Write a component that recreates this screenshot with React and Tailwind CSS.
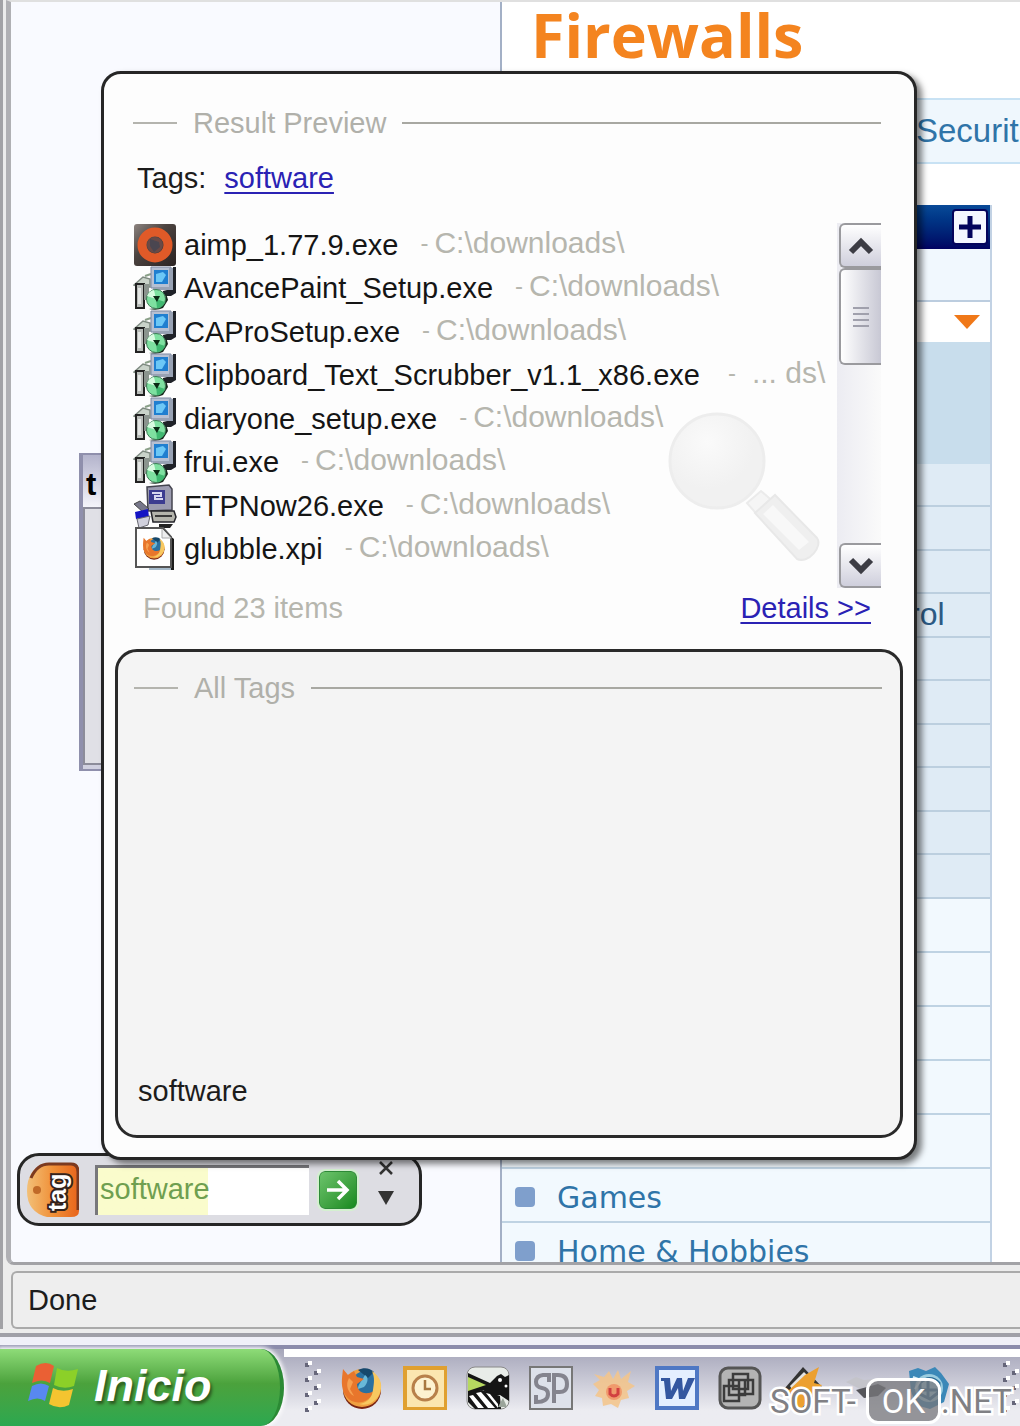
import React from "react";

function SetupIcon() {
  return (
    <svg viewBox="0 0 44 44" className="size-11 shrink-0">
      <path d="M1 19 10 11l7 2v8H6z" fill="#c9d3c9" stroke="#7e8a80" strokeWidth="1.5" />
      <path d="M12 10l6-2" stroke="#8aa088" strokeWidth="2" />
      <path d="M3 18h8v24H3z" fill="#b9bdb9" stroke="#222" strokeWidth="2" />
      <path d="M5 22h3v16H5z" fill="#e4e6e4" />
      <path d="M11 18h5v16h-5z" fill="#8b948e" />
      <path d="M18 1h20v21H18z" fill="#b6c0d2" stroke="#7c87a0" />
      <path d="M40 1h3v26l-5 3h-8v-5l8-2z" fill="#1f2228" />
      <path d="M36 2h4v22H20v-3h16z" fill="#98a2b4" />
      <path d="M21 4h14v14H21z" fill="#1f7fd0" />
      <path d="M23 8l7-2 3 3-4 7h-6z" fill="#6cc8f6" />
      <path d="M16 43q8 2 14-1l5-8-2-7-2 10-7 5z" fill="#16281c" />
      <circle cx="23" cy="33" r="9.500" fill="#7ee0a0" stroke="#3c7c54" />
      <path d="M23 33l-9-3a9.500 9.500 0 0 1 7-6z" fill="#d8fbe0" />
      <path d="M23 33l9 3a9.500 9.500 0 0 1-8 6z" fill="#3fb870" />
      <path d="M20 30h7l-3 6z" fill="#0a2a14" />
    </svg>
  );
}

function AimpIcon() {
  return (
    <svg viewBox="0 0 44 44" className="size-11 shrink-0">
      <defs>
        <linearGradient id="aimpBg" x1="0" y1="0" x2="1" y2="1">
          <stop offset="0" stopColor="#8d8480" />
          <stop offset="0.400" stopColor="#4c4340" />
          <stop offset="1" stopColor="#2a2322" />
        </linearGradient>
      </defs>
      <rect x="1" y="1" width="42" height="42" rx="3" fill="url(#aimpBg)" />
      <circle cx="22" cy="22" r="13" fill="none" stroke="#e05a28" strokeWidth="9" />
      <circle cx="22" cy="22" r="8" fill="#6a4a46" />
      <path d="M17 16l9 3 1 5-6 5-4-6z" fill="#4a4650" />
    </svg>
  );
}

function FtpIcon() {
  return (
    <svg viewBox="0 0 44 44" className="size-11 shrink-0">
      <path d="M14 3l22-2 3 4v21l-24 1z" fill="#9c9cb0" stroke="#44444f" strokeWidth="1.500" />
      <path d="M16 6h16v14H16z" fill="#3c3c90" />
      <path d="M19 9h9v3h-6v3h8" stroke="#d8d8f0" strokeWidth="2" fill="none" />
      <path d="M18 27h23l2 6-2 5H20z" fill="#b4b4ac" stroke="#25252b" strokeWidth="1.500" />
      <path d="M22 32h17" stroke="#3a3a3a" strokeWidth="2" />
      <path d="M26 40h14l-3 4H26z" fill="#222" />
      <path d="M1 20l6-3 9 8-5 4z" fill="#77778a" stroke="#444" />
      <path d="M2 28l13-3 1 8-13 2z" fill="#1414c4" />
      <path d="M4 35l13-3-2 9-9 3z" fill="#d0d0dc" stroke="#66666f" />
    </svg>
  );
}

function Firefox({ x = 0, y = 0, s = 1 }) {
  return (
    <g transform={`translate(${x} ${y}) scale(${s})`}>
      <circle cx="22" cy="24" r="19" fill="#7a2412" />
      <circle cx="22" cy="22" r="19" fill="#f0a040" />
      <circle cx="25" cy="18" r="13" fill="#2a70a0" />
      <path d="M18 4c6-3 12-2 16 2l-6 6z" fill="#16486c" />
      <path d="M25 9c4 2 3 8-1 12l-6 2c0-5 4-8 7-14z" fill="#68b8d8" />
      <path d="M3 3l5 6 6-4 3 6 7 2-7 5c0 8 8 12 17 7-4 12-20 16-28 5C0 22 2 12 3 3z" fill="#e8762c" />
      <path d="M32 5c10 7 11 16 7 24-5 9-14 11-20 9 8-1 13-6 14-14 1-7 2-12-1-19z" fill="#f8c860" />
      <path d="M9 12l4 4-3 7 4 7c-6-3-9-11-5-18z" fill="#f6a050" />
    </g>
  );
}

function XpiIcon() {
  return (
    <svg viewBox="0 0 44 44" className="size-11 shrink-0">
      <path d="M16 39h22v4H16z" fill="#a8bccc" />
      <path d="M36 8l5 4v31h-3z" fill="#1c1c1c" />
      <path d="M3 1h27l8 9v30H3z" fill="#fff" stroke="#555" strokeWidth="2" />
      <path d="M29 2v9h9" fill="#eee" stroke="#aaa" />
      <Firefox x={9} y={9} s={0.55} />
    </svg>
  );
}

const files = [
  { name: "aimp_1.77.9.exe", path: "C:\\downloads\\", Icon: AimpIcon },
  { name: "AvancePaint_Setup.exe", path: "C:\\downloads\\", Icon: SetupIcon },
  { name: "CAProSetup.exe", path: "C:\\downloads\\", Icon: SetupIcon },
  { name: "Clipboard_Text_Scrubber_v1.1_x86.exe", path: "... ds\\", Icon: SetupIcon, truncated: true },
  { name: "diaryone_setup.exe", path: "C:\\downloads\\", Icon: SetupIcon },
  { name: "frui.exe", path: "C:\\downloads\\", Icon: SetupIcon },
  { name: "FTPNow26.exe", path: "C:\\downloads\\", Icon: FtpIcon },
  { name: "glubble.xpi", path: "C:\\downloads\\", Icon: XpiIcon },
];

function Legend({ children }) {
  return (
    <h2 className="flex items-center gap-4 text-[29px] leading-8 text-[#b0b0aa]">
      <span className="h-[2px] w-11 bg-[#b4b4ae]" />
      {children}
      <span className="h-[2px] flex-1 bg-[#a8a8a2]" />
    </h2>
  );
}

function Magnifier() {
  return (
    <svg viewBox="0 0 156 156" className="absolute right-[80px] top-[188px] size-[156px]">
      <defs>
        <radialGradient id="lens" cx="0.400" cy="0.300">
          <stop offset="0" stopColor="#fafafa" />
          <stop offset="1" stopColor="#f1f1f1" />
        </radialGradient>
      </defs>
      <circle cx="50" cy="50" r="47" fill="url(#lens)" stroke="#ededed" strokeWidth="3" />
      <path d="M80 92l14-12 14 12-14 16z" fill="#f5f5f5" stroke="#ebebeb" strokeWidth="2" />
      <path d="M88 102l20-18 42 43c6 8-8 26-20 21z" fill="#efefef" stroke="#e8e8e8" strokeWidth="2" />
      <path d="M96 103l10-9 36 37-10 8z" fill="#f8f8f8" />
    </svg>
  );
}

function ScrollButton({ label, d }) {
  return (
    <button
      aria-label={label}
      className="flex h-[45px] items-center justify-center rounded-l-md border-2 border-r-0 border-[#9a9a9e] bg-linear-to-b from-white to-[#cfcfdc]"
    >
      <svg viewBox="0 0 26 18" className="h-[18px] w-[26px]">
        <path d={d} fill="none" stroke="#3c3c44" strokeWidth="6" />
      </svg>
    </button>
  );
}

function Popup() {
  return (
    <section className="absolute bottom-[105px] left-[101px] right-[103px] top-[71px] z-20 flex flex-col rounded-[20px] border-[3px] border-[#262626] bg-[#fdfdfd] px-[11px] pb-[19px] pt-[33px] shadow-[5px_4px_6px_rgba(0,0,0,0.5)]">
      <div className="pl-[18px] pr-[22px]">
        <Legend>Result Preview</Legend>
        <p className="mt-[23px] flex gap-[18px] pl-1 text-[29px] leading-8 text-[#1c1c1c]">
          Tags:
          <a href="#software" className="text-[#2a22b4] underline decoration-2 underline-offset-4">
            software
          </a>
        </p>
      </div>
      <div className="relative mt-[29px] flex items-start pl-[18px] pr-[22px]">
        <Magnifier />
        <ul className="relative grid h-[348px] min-w-0 flex-1 auto-rows-fr">
          {files.map(({ name, path, Icon, truncated }) => (
            <li key={name} className="flex h-0 min-h-full items-center whitespace-nowrap">
              <Icon />
              <span className="ml-[7px] text-[29px] leading-10 text-[#151515]">{name}</span>
              <span className={truncated ? "ml-7 pb-1 text-2xl leading-10 text-[#b6b6ae]" : "ml-[22px] pb-1 text-2xl leading-10 text-[#b6b6ae]"}>
                -
              </span>
              <span className={truncated ? "ml-4 pb-1 text-[30px] leading-10 text-[#b6b6ae]" : "ml-1.5 pb-1 text-[30px] leading-10 text-[#b6b6ae]"}>
                {path}
              </span>
            </li>
          ))}
        </ul>
        <div className="flex h-[365px] w-11 flex-col bg-linear-to-r from-[#ececf2] to-[#fafafa] pl-[2px]">
          <ScrollButton label="Scroll up" d="M3 15 13 5l10 10" />
          <div className="flex h-[97px] flex-col items-center justify-center gap-1 rounded-l-md border-2 border-r-0 border-[#9a9a9e] bg-linear-to-r from-white to-[#c8c8d4]">
            <span className="h-[2px] w-4 bg-[#a0a0ac]" />
            <span className="h-[2px] w-4 bg-[#a0a0ac]" />
            <span className="h-[2px] w-4 bg-[#a0a0ac]" />
            <span className="h-[2px] w-4 bg-[#a0a0ac]" />
          </div>
          <div className="flex-1" />
          <ScrollButton label="Scroll down" d="M3 3 13 13 23 3" />
        </div>
      </div>
      <div className="mt-1 flex justify-between pl-7 pr-8 text-[29px] leading-8">
        <span className="text-[#b6b6ae]">Found 23 items</span>
        <a href="#details" className="text-[#2a22b4] underline decoration-2 underline-offset-4">
          Details &gt;&gt;
        </a>
      </div>
      <section className="mt-[25px] flex flex-1 flex-col justify-between rounded-[22px] border-[3px] border-[#2a2a2a] bg-[#f4f4f4] pb-7 pl-4 pr-[18px] pt-5">
        <Legend>All Tags</Legend>
        <a href="#software" className="pl-1 text-[29px] leading-8 text-[#1c1c1c]">
          software
        </a>
      </section>
    </section>
  );
}

function TagBar() {
  return (
    <form className="absolute bottom-[39px] left-[17px] z-10 flex h-[73px] w-[405px] items-center rounded-[22px] border-[3px] border-[#262626] bg-[#dddde3] pl-[5px]">
      <svg viewBox="0 0 54 56" className="h-14 w-[54px]">
        <defs>
          <linearGradient id="tagBg">
            <stop offset="0" stopColor="#f2c078" />
            <stop offset="0.500" stopColor="#f09038" />
            <stop offset="1" stopColor="#e8641c" />
          </linearGradient>
        </defs>
        <path d="M22 1h24q8 0 8 8v40q0 6-8 6H22Q2 50 2 29 2 6 22 1z" fill="url(#tagBg)" />
        <path d="M6 16Q12 2 24 2h22q7 0 7 8v38" fill="none" stroke="#7c3a20" strokeWidth="3" />
        <circle cx="12" cy="28" r="4" fill="#c06a28" />
        <text
          transform="translate(41 49) rotate(-90)"
          fontSize="25"
          fontWeight="bold"
          fill="#fff"
          stroke="#33221c"
          strokeWidth="4"
          paintOrder="stroke"
        >
          tag
        </text>
      </svg>
      <input
        aria-label="Tag search"
        defaultValue="software"
        className="ml-4 h-[50px] w-[214px] border-l-[3px] border-t-[3px] border-[#77777b] bg-white bg-linear-to-r from-[#fafccc] to-[#fafccc] bg-[length:110px_100%] bg-no-repeat pb-1 pl-[2px] text-[29px] text-[#6f9f50] outline-none"
      />
      <button
        type="button"
        aria-label="Go"
        className="ml-2.5 flex size-[38px] items-center justify-center rounded-md border border-[#2e8a38] bg-linear-to-br from-[#6cc46c] to-[#118a1c] outline-2 outline-[#d4f0d0]"
      >
        <svg viewBox="0 0 24 24" className="size-6">
          <path d="M1 12h20M12 3l9 9-9 9" fill="none" stroke="#fff" strokeWidth="3.500" />
        </svg>
      </button>
      <div className="ml-[21px] flex h-full flex-col items-center gap-3.5 pt-1">
        <button type="button" aria-label="Close">
          <svg viewBox="0 0 16 16" className="size-4">
            <path d="M2 2l12 12M14 2L2 14" stroke="#333" strokeWidth="2.500" />
          </svg>
        </button>
        <button type="button" aria-label="Options">
          <svg viewBox="0 0 16 16" className="size-4">
            <path d="M0 1h16L8 15z" fill="#333" />
          </svg>
        </button>
      </div>
    </form>
  );
}

function Page() {
  return (
    <main className="flex min-h-0 flex-1">
      <div className="w-[489px] shrink-0 bg-[#f9faff]" />
      <div className="min-w-0 flex-1 border-l-2 border-[#a3b0c6] bg-white">
        <h1 className="h-24 pl-[29px] font-['Open_Sans'] text-[61px] font-bold leading-[66px] text-[#f4841f]">
          Firewalls
        </h1>
        <div className="overflow-hidden border-y-2 border-[#c8e2f4] bg-[#eff7fd] pl-[414px] text-[33px] leading-[62px] text-[#2f74a8]">
          <a href="#security">Securit</a>
        </div>
        <div className="mr-7 mt-[41px] border-r-2 border-[#c2d2e4]">
          <div className="flex h-11 items-center justify-end bg-linear-to-b from-[#0a4a98] to-[#020262] pr-[2px]">
            <button
              aria-label="Expand"
              className="flex size-9 items-center justify-center rounded-sm border-2 border-[#04045c] bg-[#f4f7ff]"
            >
              <svg viewBox="0 0 22 22" className="size-[22px]">
                <path d="M0 11h22M11 0v22" stroke="#04045c" strokeWidth="5" />
              </svg>
            </button>
          </div>
          <div className="h-[53px] border-b-2 border-[#bccddf] bg-[#f1f8fe]" />
          <div className="flex h-10 items-center justify-end pr-2.5">
            <svg viewBox="0 0 26 14" className="h-3.5 w-[26px]">
              <path d="M0 0h26L13 14z" fill="#f07818" />
            </svg>
          </div>
          <div className="h-[122px] bg-[#c8ddec]" />
          <ul>
            {[0, 1, 2, 3, 4, 5, 6, 7, 8, 9].map((n) => (
              <li
                key={n}
                className="h-11 border-b-2 border-[#bccfdf] bg-[#dfebf5] pl-[407px] text-[32px] leading-10 text-[#2c5a84] odd:h-[43px]"
              >
                {n === 3 && <a href="#control">rol</a>}
              </li>
            ))}
          </ul>
          <ul>
            {["", "", "", "", "", "Games", "Home & Hobbies"].map((label, n) => (
              <li
                key={n}
                className="flex h-[54px] items-center gap-[22px] border-b-2 border-[#bfd3e3] bg-[#f2f9fe] pl-[13px] pt-1 font-['DejaVu_Sans'] text-[30px] text-[#2f74a8]"
              >
                {label && <span className="size-5 rounded-sm bg-[#7f9fcc]" />}
                {label && <a href="#category">{label}</a>}
              </li>
            ))}
          </ul>
        </div>
      </div>
    </main>
  );
}

function Grip() {
  return (
    <svg viewBox="0 0 18 56" className="h-14 w-[18px] shrink-0">
      {[3, 18, 33, 48].map((y) => (
        <g key={y}>
          <rect x="1" y={y} width="4" height="4" fill="#66667a" />
          <rect x="4" y={y - 2} width="4" height="4" fill="#fff" />
        </g>
      ))}
      {[11, 26, 41].map((y) => (
        <g key={y}>
          <rect x="10" y={y} width="4" height="4" fill="#66667a" />
          <rect x="13" y={y - 2} width="4" height="4" fill="#fff" />
        </g>
      ))}
    </svg>
  );
}

const launchers = [
  ["Firefox", <Firefox />],
  [
    "Outlook",
    <>
      <rect x="2" y="2" width="41" height="41" fill="#fbe6b0" stroke="#e0a030" strokeWidth="4" />
      <circle cx="22" cy="22" r="12" fill="#fdf2d0" stroke="#b8804a" strokeWidth="3" />
      <path d="M22 14v9h6" fill="none" stroke="#a87840" strokeWidth="2.500" />
    </>,
  ],
  [
    "The Bat",
    <>
      <rect x="1" y="1" width="42" height="42" rx="8" fill="#e8ece8" stroke="#888" />
      <path d="M2 7l22 10 7-7 4-2 4 3 4-2v26l-9-6-8 1-9-6-15 4z" fill="#151515" />
      <path d="M2 11l18 8-18 6z" fill="#b6d860" />
      <path d="M2 26l14-2 18 6 1 13H9l-7-7z" fill="#151515" />
      <path d="M10 27l5-1 14 16h-7zM3 30l4-1 11 13h-6zM20 27l4 1 8 10v4z" fill="#fff" />
      <path d="M37 32l4 9h-9z" fill="#9aa49a" />
      <circle cx="34" cy="14" r="2" fill="#fff" />
      <circle cx="40" cy="20" r="1.500" fill="#fff" />
    </>,
  ],
  [
    "SP",
    <>
      <rect x="1" y="1" width="42" height="42" fill="#dde1ea" stroke="#777" strokeWidth="2" />
      <path d="M20 16V9h-6q-7 1-7 7 0 5 6 6t6 6q0 8-12 8v-7M25 37V9h4q9 0 9 9t-9 8h-4" fill="none" stroke="#84848e" strokeWidth="4" />
    </>,
  ],
  [
    "IrfanView",
    <>
      <path d="M8 14L2 8l10 3 5-6 4 8 5-9 3 9 10-8-3 11 7 4-8 5 2 7-8 2-3 8-7-4-8 2-1-8-7-2 4-6-6-6z" fill="#f5c488" opacity=".85" />
      <circle cx="22" cy="26" r="8" fill="#f09a6c" />
      <path d="M18 22v6q4 4 8 0v-6" fill="none" stroke="#d24040" strokeWidth="3" />
    </>,
  ],
  [
    "Word",
    <>
      <rect x="2" y="2" width="40" height="40" fill="#e4efff" stroke="#4f78c4" strokeWidth="4" />
      <path d="M6 12h9l1 13 6-13h5l1 13 5-13h7l-10 21h-6l-1-11-6 11h-6l-2-18H6z" fill="#3457a0" />
    </>,
  ],
  [
    "VMware",
    <>
      <rect x="2" y="2" width="40" height="40" rx="8" fill="#b4b4b4" stroke="#555" strokeWidth="3" />
      <path d="M15 8h15v15H15zM6 20h15v15H6zM21 14h14v14H21zM11 14h16v15H11z" fill="none" stroke="#3c3c3c" strokeWidth="2.500" />
    </>,
  ],
  [
    "Winamp",
    <>
      <path d="M4 22L22 1l20 21-20 20z" fill="#333" />
      <path d="M9 20L23 6l10 10-18 14z" fill="#e4e4e4" />
      <path d="M38 1l-5 16 8 2-20 23-10-2 3-12-8-2 18-17z" fill="#eca030" />
    </>,
  ],
  [
    "Explorer bird",
    <>
      <path d="M2 16l10-5 8 3 10-1 12 8-6 7-12 1-10-7z" fill="#c4c4ca" />
      <path d="M12 24l22-6 8 4-8 8-14 2z" fill="#55555a" />
    </>,
  ],
  [
    "Internet",
    <>
      <path d="M2 5l9-3 8 3 9-4 6 6 8 11-5 18-14 7-14-4-5-14z" fill="#3b88b8" />
      <circle cx="22" cy="22" r="14" fill="#9accdf" />
      <path d="M13 17q10-9 19 0v9l-9 7-10-5zM13 24h18M21 14v18" fill="none" stroke="#286a94" strokeWidth="3" />
      <path d="M6 11l8 3-6 9" fill="none" stroke="#d0ecf8" strokeWidth="2" />
    </>,
  ],
];

function Taskbar() {
  return (
    <footer className="relative flex h-[81px] shrink-0 border-t-4 border-[#8c8cac] bg-linear-to-b from-[#a6a6ba] to-[#ececf1] to-80%">
      <button className="flex h-full w-[284px] shrink-0 items-center gap-3.5 rounded-r-[24px_40px] border-r-4 border-[#2b8a34] bg-linear-to-b from-[#8edc78] via-[#4ba23c] via-45% to-[#2aa850] pb-1 pl-7 shadow-[0_0_4px_2px_#fff]">
        <svg viewBox="0 0 52 48" className="h-12 w-[52px]">
          <path d="M8 4q10-6 18 0l-4 17q-8-5-18 0z" fill="#ea6034" />
          <path d="M29 6q9 5 21 1l-4 17q-10 4-20-1z" fill="#8cd028" />
          <path d="M4 24q9-5 17 0l-4 15q-7-5-17 0z" fill="#5888f0" />
          <path d="M25 26q9 5 20 1l-4 16q-10 5-20-1z" fill="#f4c430" />
        </svg>
        <span className="text-[45px] font-bold italic leading-none text-white [text-shadow:2px_3px_3px_#2c5a20]">
          Inicio
        </span>
      </button>
      <div className="flex min-w-0 flex-1 items-center border-t-8 border-white pb-2 pl-5">
        <Grip />
        <nav className="ml-[18px] flex gap-[19px]">
          {launchers.map(([label, art]) => (
            <button key={label} aria-label={label} className="size-11">
              <svg viewBox="0 0 44 44" className="size-11">
                {art}
              </svg>
            </button>
          ))}
        </nav>
        <div className="flex-1" />
        <Grip />
      </div>
      <div className="absolute bottom-[2px] right-2 flex items-center font-['Roboto'] text-[33px] leading-none text-[#808084]">
        <span className="[paint-order:stroke] [-webkit-text-stroke:5px_white]">SOFT-</span>
        <span className="ml-2.5 flex h-[46px] w-[75px] items-center justify-center rounded-xl border-[3px] border-white bg-[#77777b]/75 text-white">
          OK
        </span>
        <span className="[paint-order:stroke] [-webkit-text-stroke:5px_white]">.NET</span>
      </div>
    </footer>
  );
}

export default function App() {
  return (
    <div className="flex h-screen flex-col overflow-hidden bg-white font-['Liberation_Sans',sans-serif]">
      <div className="flex min-h-0 flex-1 flex-col bg-[#ececec]">
        <div className="relative flex min-h-0 flex-1 flex-col">
          <div className="flex min-h-0 flex-1 flex-col overflow-hidden border-l-[3px] border-[#a2a2a6]">
            <div className="ml-[3px] flex min-h-0 flex-1 flex-col overflow-hidden rounded-bl-lg border-b-[3px] border-l-[5px] border-t-2 border-b-[#a2a2a6] border-l-[#b0b0b4] border-t-[#e0e0e0] bg-[#f9faff]">
              <Page />
            </div>
          </div>
          <aside className="absolute left-[79px] top-[453px] h-[318px] w-[60px] border-2 border-l-4 border-[#8f8fac] bg-[#d0d0e0]">
            <p className="h-[52px] bg-linear-to-b from-[#b4b4cc] to-[#f4f4fa] pl-[3px] text-[31px] font-bold leading-[60px] text-black">
              t
            </p>
            <div className="h-[258px] border-2 border-[#8c8c9a] bg-[#e0e0e6]" />
          </aside>
          <TagBar />
          <Popup />
        </div>
        <div className="border-l-[3px] border-[#a2a2a6] pl-2 pt-1.5">
          <div className="rounded-l-md border-2 border-r-0 border-[#aaaaaa] bg-[#eeeeee] pl-[15px] text-[29px] leading-[54px] text-[#1c1c1c]">
            Done
          </div>
        </div>
        <div className="mt-1 h-1 bg-[#a0a0a8]" />
      </div>
      <div className="h-2 shrink-0 bg-[#f0f0f8]" />
      <Taskbar />
    </div>
  );
}
